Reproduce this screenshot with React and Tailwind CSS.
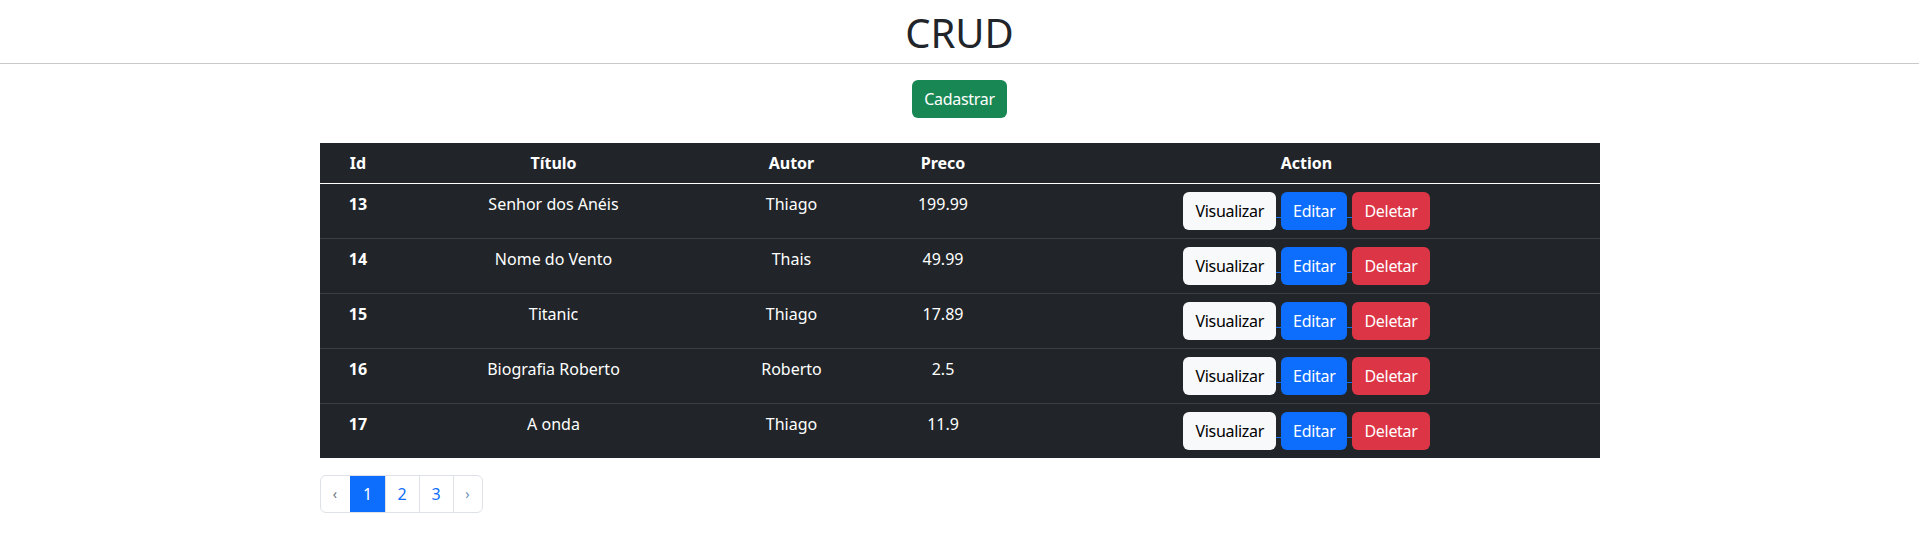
import { useState } from "react";

const livros = [
    { id: 13, titulo: "Senhor dos Anéis", autor: "Thiago", preco: "199.99" },
    { id: 14, titulo: "Nome do Vento", autor: "Thais", preco: "49.99" },
    { id: 15, titulo: "Titanic", autor: "Thiago", preco: "17.89" },
    { id: 16, titulo: "Biografia Roberto", autor: "Roberto", preco: "2.5" },
    { id: 17, titulo: "A onda", autor: "Thiago", preco: "11.9" },
];

function Gap() {
    // underline of the whitespace between the links
    return <span className="inline-block w-[5px] h-px bg-[#0d6efd] translate-y-[6px]" />;
}

function App() {
    const [page, setPage] = useState(1);

    return (
        <div className="min-h-screen bg-white text-[#212529] font-['Noto_Sans','Open_Sans',sans-serif] text-base">
            {/* Header */}
            <header className="h-[64px] border-b border-[#c8c9ca] flex justify-center pt-[9px]">
                <h1 className="text-[40px] leading-[48px] font-normal">CRUD</h1>
            </header>

            <div className="w-[1280px] mx-auto">
                <div className="flex justify-center pt-[16px]">
                    <button className="h-[38px] px-3 rounded-md bg-[#198754] text-white leading-6 tracking-[-0.3px]">
                        Cadastrar
                    </button>
                </div>

                {/* Tabela */}
                <table className="mt-[25px] w-full border-collapse bg-[#212529] text-white text-center">
                    <thead>
                        <tr className="border-b border-white">
                            <th className="w-[77px] py-2 font-bold leading-6">Id</th>
                            <th className="w-[314px] py-2 font-bold leading-6">Título</th>
                            <th className="w-[162px] py-2 font-bold leading-6">Autor</th>
                            <th className="w-[141px] py-2 font-bold leading-6">Preco</th>
                            <th className="py-2 font-bold leading-6">Action</th>
                        </tr>
                    </thead>
                    <tbody>
                        {livros.map((l, i) => (
                            <tr
                                key={l.id}
                                className={i < livros.length - 1 ? "border-b border-[#3a3f44]" : ""}
                            >
                                <td className="align-top py-2 font-bold leading-6">{l.id}</td>
                                <td className="align-top py-2 leading-6">{l.titulo}</td>
                                <td className="align-top py-2 leading-6">{l.autor}</td>
                                <td className="align-top py-2 leading-6">{l.preco}</td>
                                <td className="align-top py-2">
                                    <div className="flex items-center justify-center tracking-[-0.3px]">
                                        <button className="h-[38px] px-3 rounded-md bg-[#f8f9fa] text-black leading-6">
                                            Visualizar
                                        </button>
                                        <Gap />
                                        <button className="h-[38px] px-3 rounded-md bg-[#0d6efd] text-white leading-6">
                                            Editar
                                        </button>
                                        <Gap />
                                        <button className="h-[38px] px-3 rounded-md bg-[#dc3545] text-white leading-6">
                                            Deletar
                                        </button>
                                    </div>
                                </td>
                            </tr>
                        ))}
                    </tbody>
                </table>

                {/* Paginacao */}
                <nav className="mt-[17px] flex">
                    <div className="flex border border-[#dee2e6] rounded-md overflow-hidden">
                        <button className="w-[29px] h-[36px] text-[#6c757d] text-sm">‹</button>
                        {[1, 2, 3].map((n) => (
                            <button
                                key={n}
                                onClick={() => setPage(n)}
                                className={
                                    n === page
                                        ? "w-[35px] h-[36px] border-l border-[#0d6efd] bg-[#0d6efd] text-white"
                                        : "w-[34px] h-[36px] border-l border-[#dee2e6] text-[#0d6efd]"
                                }
                            >
                                {n}
                            </button>
                        ))}
                        <button className="w-[29px] h-[36px] border-l border-[#dee2e6] text-[#6c8fb8] text-sm">›</button>
                    </div>
                </nav>
            </div>
        </div>
    );
}

export default App;
